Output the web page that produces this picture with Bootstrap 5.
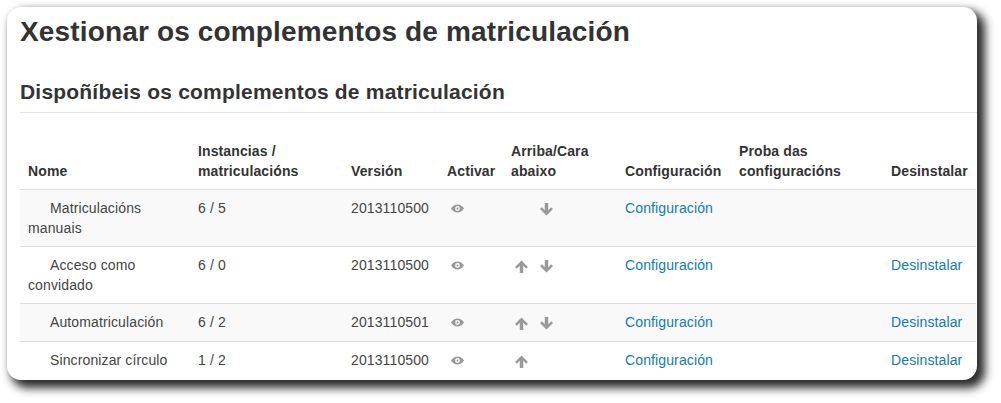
<!DOCTYPE html>
<html lang="gl">
<head>
    <meta charset="UTF-8">
    <meta name="viewport" content="width=device-width, initial-scale=1.0">
    <title>Xestionar os complementos de matriculación</title>
    <link href="https://cdn.jsdelivr.net/npm/bootstrap@5.3.1/dist/css/bootstrap.min.css" rel="stylesheet">
    <style>
        body { background: #fff; font-family: "Liberation Sans", Arial, sans-serif; font-size: 14px; line-height: 20px; color: #333; padding: 7px 0 24px 7px; }
        .shot-panel { width: 970px; height: 373px; background: #fff; border-radius: 14px; box-shadow: 6px 6px 10px 2px #2a2a2a, 0 0 4px rgba(0,0,0,.08); padding: 0 0 0 13px; overflow: hidden; }
        .page-title { font-size: 28px; font-weight: 700; line-height: 40px; margin: 5px 0 0; letter-spacing: .15px; color: #333; }
        .sub-title { font-size: 21px; font-weight: 700; line-height: 40px; margin: 20px 0 0; padding-bottom: 0; height: 41px; border-bottom: 1px solid #e5e5e5; letter-spacing: .2px; color: #333; }
        .plugin-table { table-layout: fixed; width: 956px; margin: 20px 0 0; border-collapse: collapse; }
        .plugin-table th, .plugin-table td { padding: 8px; line-height: 20px; vertical-align: top; border: 0; border-top: 1px solid #ddd; letter-spacing: .12px; color: #444; background: transparent; box-shadow: none; }
        .plugin-table td { height: 38px; }
        .plugin-table thead th { vertical-align: bottom; border-top: 0; border-bottom: 1px solid #ddd; font-weight: 700; color: #333; }
        .plugin-table tbody tr:first-child td { border-top: 0; }
        .plugin-table tbody tr:nth-child(odd) td { background: #f9f9f9; }
        .plugin-table a { color: #0e7cb5; text-decoration: none; }
        .plugin-name { padding-left: 22px; }
        .act-icon { display: inline-block; width: 13px; height: 13px; vertical-align: -2px; fill: #999; }
        .act-arrow { vertical-align: -3px; }
        .act-gap { margin-left: 12px; }
        .act-blank { display: inline-block; width: 13px; }
        .act-cell { padding-left: 12px !important; }
    </style>
</head>
<body>
<div class="shot-panel">
    <h1 class="page-title">Xestionar os complementos de matriculación</h1>
    <h3 class="sub-title">Dispoñíbeis os complementos de matriculación</h3>

    <table class="table plugin-table">
        <colgroup>
            <col style="width:170px"><col style="width:153px"><col style="width:96px"><col style="width:64px">
            <col style="width:114px"><col style="width:114px"><col style="width:152px"><col style="width:93px">
        </colgroup>
        <thead>
            <tr>
                <th>Nome</th>
                <th>Instancias / matriculacións</th>
                <th>Versión</th>
                <th>Activar</th>
                <th>Arriba/Cara abaixo</th>
                <th>Configuración</th>
                <th>Proba das configuracións</th>
                <th>Desinstalar</th>
            </tr>
        </thead>
        <tbody>
            <tr>
                <td><span class="plugin-name">Matriculacións manuais</span></td>
                <td>6 / 5</td>
                <td>2013110500</td>
                <td class="act-cell"><svg class="act-icon" viewBox="0 0 12 12"><use href="#ico-eye"/></svg></td>
                <td class="act-cell"><span class="act-blank"></span><svg class="act-icon act-arrow act-gap" viewBox="0 0 12 12"><use href="#ico-down"/></svg></td>
                <td><a href="#">Configuración</a></td>
                <td></td>
                <td></td>
            </tr>
            <tr>
                <td><span class="plugin-name">Acceso como convidado</span></td>
                <td>6 / 0</td>
                <td>2013110500</td>
                <td class="act-cell"><svg class="act-icon" viewBox="0 0 12 12"><use href="#ico-eye"/></svg></td>
                <td class="act-cell"><svg class="act-icon act-arrow" viewBox="0 0 12 12"><use href="#ico-up"/></svg><svg class="act-icon act-arrow act-gap" viewBox="0 0 12 12"><use href="#ico-down"/></svg></td>
                <td><a href="#">Configuración</a></td>
                <td></td>
                <td><a href="#">Desinstalar</a></td>
            </tr>
            <tr>
                <td><span class="plugin-name">Automatriculación</span></td>
                <td>6 / 2</td>
                <td>2013110501</td>
                <td class="act-cell"><svg class="act-icon" viewBox="0 0 12 12"><use href="#ico-eye"/></svg></td>
                <td class="act-cell"><svg class="act-icon act-arrow" viewBox="0 0 12 12"><use href="#ico-up"/></svg><svg class="act-icon act-arrow act-gap" viewBox="0 0 12 12"><use href="#ico-down"/></svg></td>
                <td><a href="#">Configuración</a></td>
                <td></td>
                <td><a href="#">Desinstalar</a></td>
            </tr>
            <tr>
                <td><span class="plugin-name">Sincronizar círculo</span></td>
                <td>1 / 2</td>
                <td>2013110500</td>
                <td class="act-cell"><svg class="act-icon" viewBox="0 0 12 12"><use href="#ico-eye"/></svg></td>
                <td class="act-cell"><svg class="act-icon act-arrow" viewBox="0 0 12 12"><use href="#ico-up"/></svg></td>
                <td><a href="#">Configuración</a></td>
                <td></td>
                <td><a href="#">Desinstalar</a></td>
            </tr>
        </tbody>
    </table>
</div>

<svg width="0" height="0" class="d-none">
    <defs>
        <path id="ico-eye" fill-rule="evenodd" d="M0 6C1.600 3.500 3.600 2.200 6 2.200S10.400 3.500 12 6c-1.600 2.500-3.600 3.800-6 3.800S1.600 8.500 0 6zM6 3.800A2.200 2.200 0 1 0 6 8.200 2.200 2.200 0 0 0 6 3.800zM6 5A1 1 0 1 1 6 7 1 1 0 0 1 6 5z"/>
        <path id="ico-up" d="M6 .5 12 6.500 10.300 8 7.600 5.300V12H4.400V5.300L1.700 8 0 6.500z"/>
        <path id="ico-down" d="M6 11.500 0 5.500 1.700 4 4.400 6.700V0H7.600V6.700L10.300 4 12 5.500z"/>
    </defs>
</svg>
</body>
</html>
